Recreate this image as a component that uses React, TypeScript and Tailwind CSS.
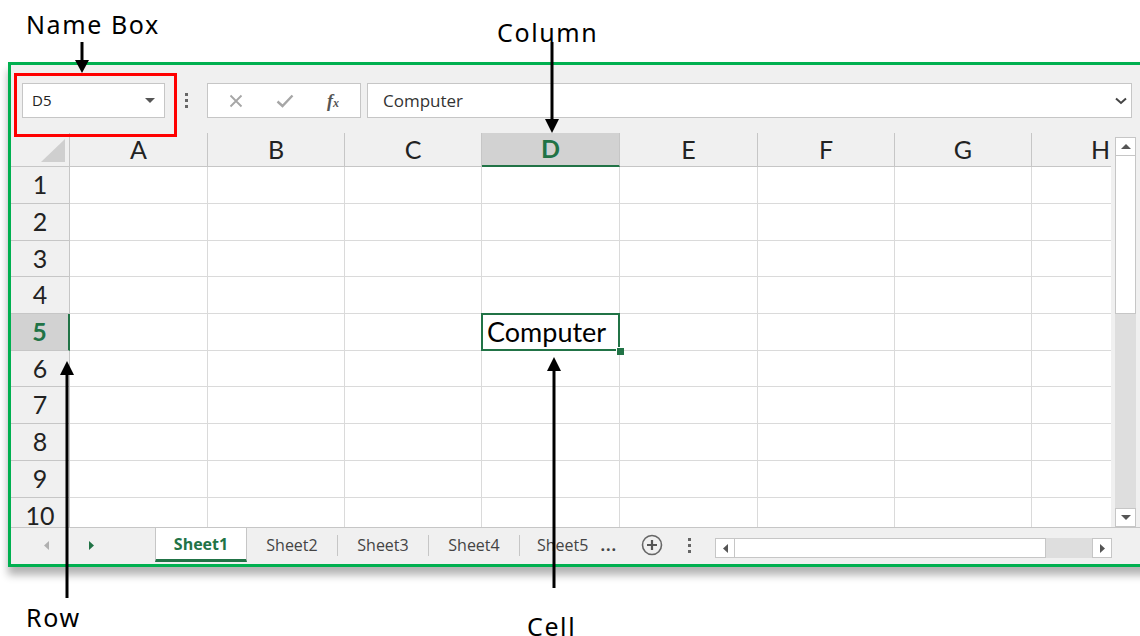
import React from "react";

const GREEN = "#217346";
const COLS = ["A", "B", "C", "D", "E", "F", "G", "H"];
const COL_W = [138, 137, 137, 138, 138, 137, 137, 138];
const ROW_H = [37, 37, 36, 37, 37, 36, 37, 37, 37, 36];

const uiFont = { fontFamily: '"Open Sans", "Noto Sans", sans-serif' };
const gridFont = { fontFamily: 'Lato, "Open Sans", sans-serif' };
const labelFont = { fontFamily: '"Noto Sans", "DejaVu Sans", sans-serif' };

function Triangle({ dir, color, w = 5, h = 9 }: { dir: "left" | "right" | "up" | "down"; color: string; w?: number; h?: number }) {
  const pts =
    dir === "left"
      ? `${w},0 0,${h / 2} ${w},${h}`
      : dir === "right"
      ? `0,0 ${w},${h / 2} 0,${h}`
      : dir === "up"
      ? `0,${w} ${h / 2},0 ${h},${w}`
      : `0,0 ${h},0 ${h / 2},${w}`;
  const vw = dir === "left" || dir === "right" ? w : h;
  const vh = dir === "left" || dir === "right" ? h : w;
  return (
    <svg width={vw} height={vh} viewBox={`0 0 ${vw} ${vh}`}>
      <polygon points={pts} fill={color} />
    </svg>
  );
}

function FormulaBar() {
  return (
    <div className="h-[68px] flex items-start pt-[18px] pl-[11px]">
      {/* Name box */}
      <div className="w-[143px] h-[35px] bg-white border border-[#c6c6c6] flex items-center justify-between pl-[9px] pr-[9px]">
        <span className="text-[15px] text-[#222]" style={uiFont}>D5</span>
        <Triangle dir="down" color="#555" w={5} h={10} />
      </div>
      {/* Drag handle dots */}
      <div className="w-[42px] h-[35px] flex flex-col items-center justify-center gap-[3px]">
        <span className="w-[3px] h-[3px] bg-[#666]" />
        <span className="w-[3px] h-[3px] bg-[#666]" />
        <span className="w-[3px] h-[3px] bg-[#666]" />
      </div>
      {/* Cancel / enter / function */}
      <div className="w-[154px] h-[35px] bg-white border border-[#c6c6c6] flex items-center">
        <div className="w-[54px] flex justify-center pl-[2px]">
          <svg width="14" height="14" viewBox="0 0 14 14">
            <path d="M1.5 1.5 L12.5 12.5 M12.5 1.5 L1.5 12.5" stroke="#a6a6a6" strokeWidth="1.8" fill="none" />
          </svg>
        </div>
        <div className="w-[46px] flex justify-center">
          <svg width="18" height="14" viewBox="0 0 18 14">
            <path d="M1.5 7.5 L6.5 12 L16.5 1.5" stroke="#a6a6a6" strokeWidth="2.4" fill="none" />
          </svg>
        </div>
        <div className="w-[50px] flex justify-center">
          <span className="italic font-bold text-[18px] text-[#555] leading-none" style={{ fontFamily: '"Liberation Serif", serif' }}>
            f<span className="text-[12px]">x</span>
          </span>
        </div>
      </div>
      {/* Formula input */}
      <div className="ml-[6px] w-[765px] h-[35px] bg-white border border-[#c6c6c6] flex items-center justify-between pl-[15px] pr-[4px]">
        <span className="text-[17px] text-[#333]" style={uiFont}>Computer</span>
        <svg width="12" height="8" viewBox="0 0 12 8">
          <path d="M1 1.5 L6 6 L11 1.5" stroke="#444" strokeWidth="2" fill="none" />
        </svg>
      </div>
    </div>
  );
}

function Grid() {
  return (
    <div className="flex h-[394px]">
      <div className="w-[1100px] overflow-hidden flex flex-col" style={gridFont}>
        {/* Column headers */}
        <div className="flex h-[34px] shrink-0">
          <div className="w-[59px] shrink-0 border-r border-b border-[#c6c6c6] flex items-end justify-end pr-[4px] pb-[4px]">
            <svg width="24" height="23" viewBox="0 0 24 23">
              <polygon points="24,0 24,23 0,23" fill="#cfcfcf" />
            </svg>
          </div>
          {COLS.map((c, i) => {
            const sel = c === "D";
            return (
              <div
                key={c}
                style={{ width: COL_W[i] }}
                className={
                  sel
                    ? "shrink-0 bg-[#d2d2d2] border-r border-[#c6c6c6] border-b-2 border-b-[#217346] flex items-center justify-center text-[25px] font-bold text-[#217346]"
                    : "shrink-0 border-r border-b border-[#c6c6c6] flex items-center justify-center text-[25px] text-[#222]"
                }
              >
                {c}
              </div>
            );
          })}
        </div>
        {/* Rows */}
        {ROW_H.map((h, r) => {
          const rowSel = r === 4;
          return (
            <div key={r} className={rowSel ? "flex shrink-0 relative z-10" : "flex shrink-0"} style={{ height: h }}>
              <div
                className={
                  rowSel
                    ? "w-[59px] shrink-0 bg-[#d2d2d2] border-b border-[#c6c6c6] border-r-2 border-r-[#217346] flex items-center justify-center text-[25px] font-bold text-[#217346]"
                    : "w-[59px] shrink-0 border-r border-b border-[#c6c6c6] flex items-center justify-center text-[25px] text-[#222]"
                }
              >
                {r + 1}
              </div>
              {COLS.map((c, i) => {
                const active = rowSel && c === "D";
                return (
                  <div
                    key={c}
                    style={{ width: COL_W[i] }}
                    className={
                      active
                        ? "shrink-0 bg-white border-r border-b border-[#dadada] relative z-10"
                        : "shrink-0 bg-white border-r border-b border-[#dadada] relative"
                    }
                  >
                    {active && (
                      <>
                        <div className="absolute -left-[1px] -top-[1px] -right-[1px] -bottom-[1px] border-2 border-[#217346]" />
                        <div className="absolute -right-[5px] -bottom-[5px] w-[8px] h-[8px] bg-[#217346] border-l border-t border-white" />
                        <span className="absolute left-[5px] top-[1px] text-[27px] text-black leading-[34px] whitespace-nowrap">
                          Computer
                        </span>
                      </>
                    )}
                  </div>
                );
              })}
            </div>
          );
        })}
      </div>
      {/* Vertical scrollbar */}
      <div className="w-[29px] shrink-0 pl-[4px] pr-[4px] pt-[4px] flex flex-col">
        <div className="h-[19px] bg-white border border-[#c6c6c6] flex items-center justify-center">
          <Triangle dir="up" color="#555" w={5} h={10} />
        </div>
        <div className="h-[158px] bg-white border border-[#c6c6c6] border-t-0" />
        <div className="flex-1 bg-[#dedede]" />
        <div className="h-[19px] bg-white border border-[#c6c6c6] flex items-center justify-center">
          <Triangle dir="down" color="#555" w={5} h={10} />
        </div>
      </div>
    </div>
  );
}

function TabBar() {
  const others = ["Sheet2", "Sheet3", "Sheet4"];
  return (
    <div className="h-[37px] flex items-start border-t border-[#c6c6c6] mr-[4px]" style={uiFont}>
      <div className="w-[144px] h-[34px] flex items-center">
        <div className="w-[38px] flex justify-end">
          <Triangle dir="left" color="#b0b0b0" w={5} h={9} />
        </div>
        <div className="w-[45px] flex justify-end">
          <Triangle dir="right" color={GREEN} w={5} h={9} />
        </div>
      </div>
      <div className="w-[92px] h-[34px] bg-white border-x border-[#c6c6c6] border-b-[3px] border-b-[#217346] flex items-center justify-center text-[16px] font-bold text-[#217346]">
        Sheet1
      </div>
      {others.map((s) => (
        <div key={s} className="w-[91px] h-[34px] flex items-center">
          <span className="flex-1 text-center text-[16px] text-[#444]">{s}</span>
          <span className="w-px h-[21px] bg-[#c6c6c6]" />
        </div>
      ))}
      <div className="h-[34px] flex items-center pl-[17px] text-[16px] text-[#444]">Sheet5</div>
      <div className="h-[34px] flex items-center pl-[12px] text-[16px] text-[#444] font-bold tracking-[1px]">...</div>
      <div className="h-[34px] flex items-center pl-[24px]">
        <svg width="22" height="22" viewBox="0 0 22 22">
          <circle cx="11" cy="11" r="9.5" stroke="#666" strokeWidth="1.6" fill="none" />
          <path d="M11 6 V16 M6 11 H16" stroke="#555" strokeWidth="2.2" />
        </svg>
      </div>
      <div className="h-[34px] w-[52px] flex flex-col items-center justify-center gap-[3px]">
        <span className="w-[3px] h-[3px] bg-[#666]" />
        <span className="w-[3px] h-[3px] bg-[#666]" />
        <span className="w-[3px] h-[3px] bg-[#666]" />
      </div>
      {/* Horizontal scrollbar */}
      <div className="mt-[10px] h-[20px] w-[397px] flex">
        <div className="w-[20px] bg-white border border-[#c6c6c6] flex items-center justify-center">
          <Triangle dir="left" color="#555" w={5} h={9} />
        </div>
        <div className="w-[311px] bg-white border-y border-r border-[#c6c6c6]" />
        <div className="flex-1 bg-[#dedede]" />
        <div className="w-[20px] bg-white border border-[#c6c6c6] flex items-center justify-center">
          <Triangle dir="right" color="#555" w={5} h={9} />
        </div>
      </div>
    </div>
  );
}

function Callouts() {
  return (
    <>
      <span className="absolute left-[26px] top-[6px] text-[25px] text-black tracking-[1.6px]" style={labelFont}>Name Box</span>
      <span className="absolute left-[497px] top-[14px] text-[25px] text-black tracking-[1.6px]" style={labelFont}>Column</span>
      <span className="absolute left-[26px] top-[599px] text-[25px] text-black tracking-[1.6px]" style={labelFont}>Row</span>
      <span className="absolute left-[527px] top-[608px] text-[25px] text-black tracking-[1.6px]" style={labelFont}>Cell</span>
      <div className="absolute left-[14px] top-[73px] w-[163px] h-[64px] border-[3px] border-[#ff0000]" />
      <svg className="absolute left-0 top-0" width="1140" height="636" viewBox="0 0 1140 636">
        {/* Name box pointer */}
        <line x1="82" y1="42" x2="82" y2="62" stroke="#000" strokeWidth="3" />
        <polygon points="75,60 89,60 82,73" fill="#000" />
        {/* Column pointer */}
        <line x1="552" y1="42" x2="552" y2="122" stroke="#000" strokeWidth="3" />
        <polygon points="545,119 559,119 552,133" fill="#000" />
        {/* Row pointer */}
        <line x1="67" y1="372" x2="67" y2="598" stroke="#000" strokeWidth="3" />
        <polygon points="60,375 74,375 67,361" fill="#000" />
        {/* Cell pointer */}
        <line x1="554" y1="368" x2="554" y2="588" stroke="#000" strokeWidth="3" />
        <polygon points="547,371 561,371 554,357" fill="#000" />
      </svg>
    </>
  );
}

export default function App() {
  return (
    <div className="relative w-[1140px] h-[636px] overflow-hidden bg-white pt-[62px] pl-[8px]">
      <div className="w-[1145px] h-[505px] border-[3px] border-[#00b050] bg-[#f0f0f0] shadow-[0_8px_8px_rgba(0,0,0,0.3)] flex flex-col">
        <FormulaBar />
        <Grid />
        <TabBar />
      </div>
      <Callouts />
    </div>
  );
}
